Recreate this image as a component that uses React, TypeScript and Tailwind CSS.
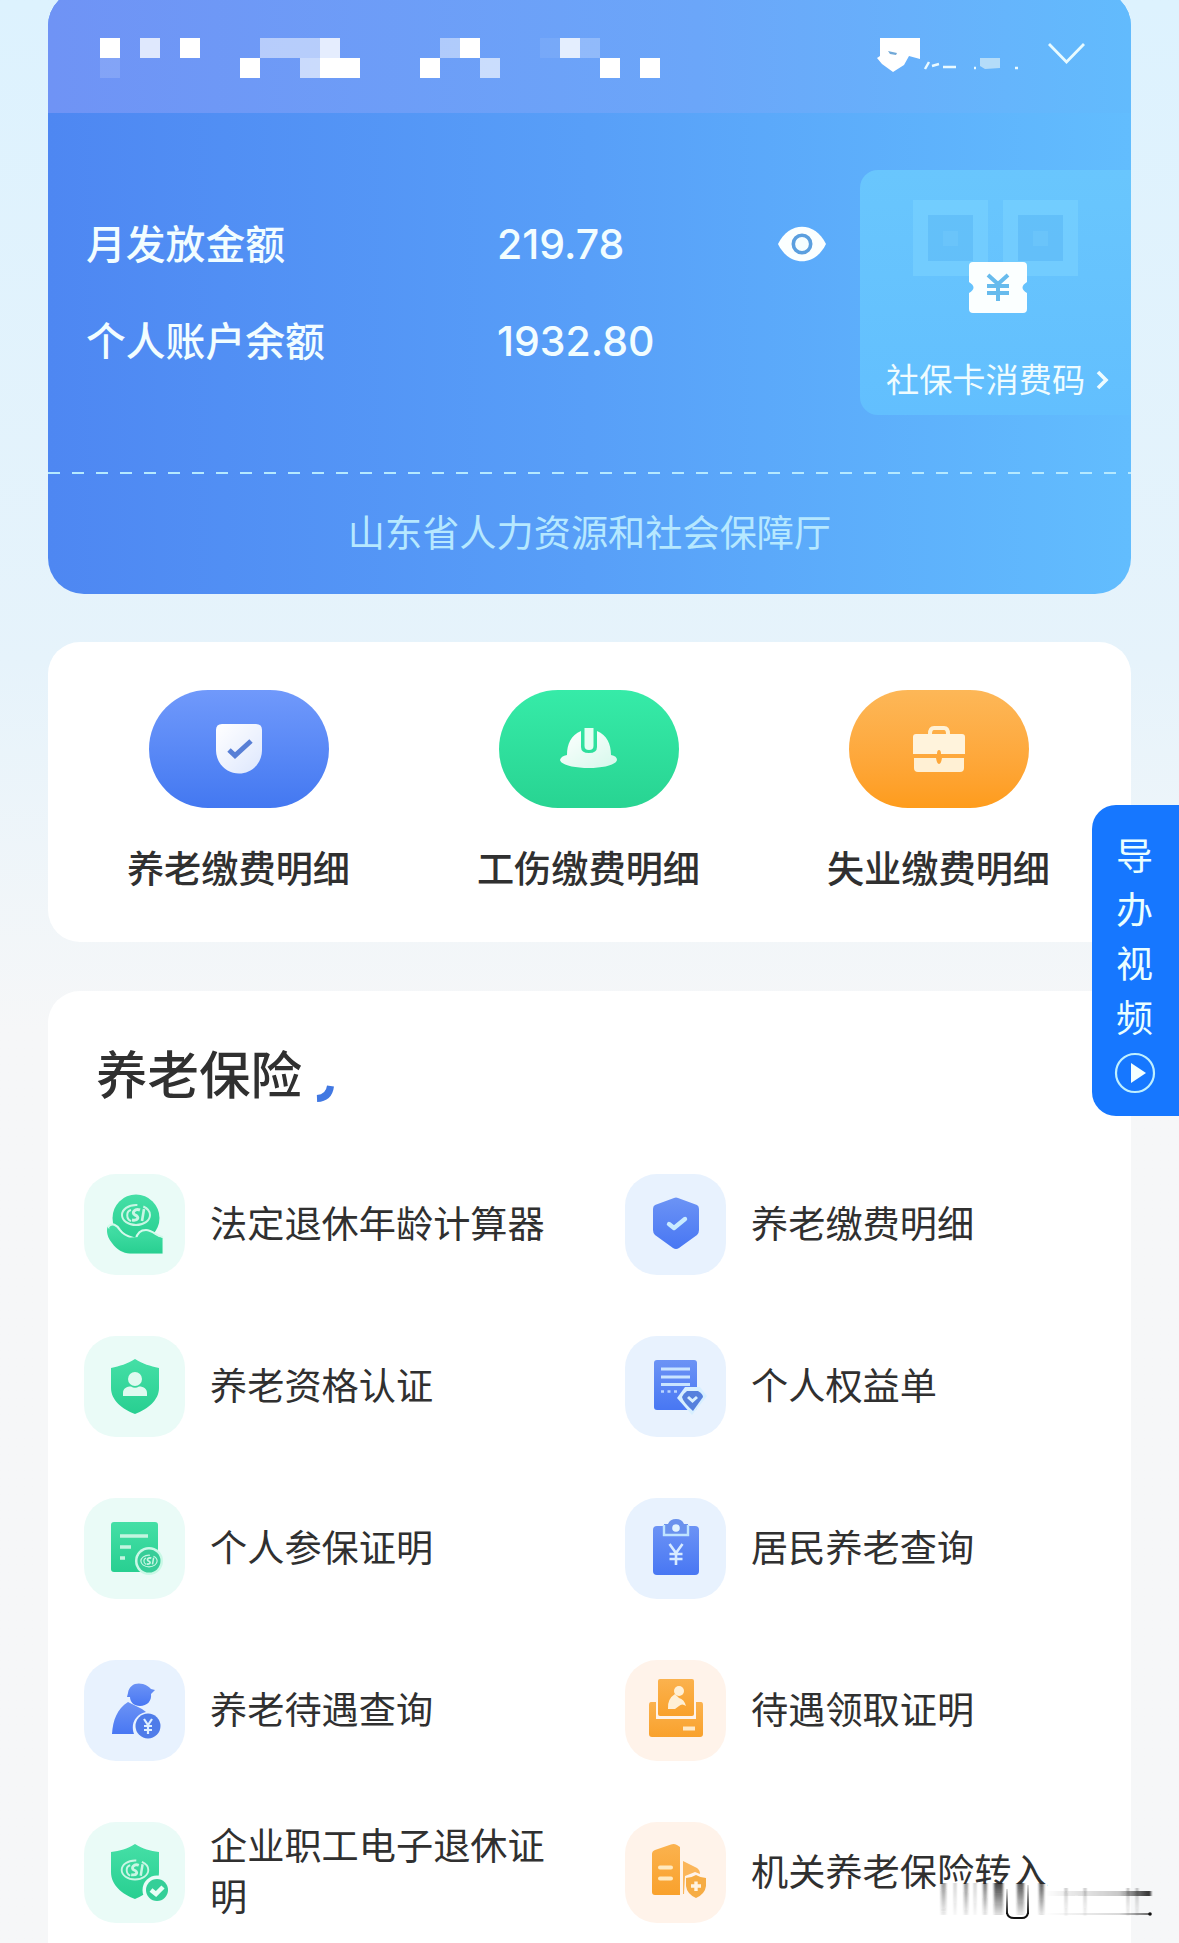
import React from "react";

type Tone = "green" | "blue" | "orange";

const tileBg: Record<Tone, string> = {
  green: "bg-[#eafbf7]",
  blue: "bg-[#e8f2fe]",
  orange: "bg-[#fff3ea]",
};
const soft: Record<Tone, string> = { green: "#dffaf0", blue: "#dff0ff", orange: "#fff0dc" };

function Gradients() {
  return (
    <svg width="0" height="0" className="absolute">
      <defs>
        <linearGradient id="green" x1="0" y1="0" x2="0" y2="1">
          <stop offset="0" stopColor="#45dfa6" />
          <stop offset="1" stopColor="#28cf91" />
        </linearGradient>
        <linearGradient id="blue" x1="0" y1="0" x2="0" y2="1">
          <stop offset="0" stopColor="#6c93f5" />
          <stop offset="1" stopColor="#4877f3" />
        </linearGradient>
        <linearGradient id="orange" x1="0" y1="0" x2="0" y2="1">
          <stop offset="0" stopColor="#fbb24e" />
          <stop offset="1" stopColor="#f9a12c" />
        </linearGradient>
        <linearGradient id="paper" x1="0" y1="0" x2="1" y2="1">
          <stop offset="0" stopColor="#ffffff" />
          <stop offset="1" stopColor="#ffffff" stopOpacity="0.8" />
        </linearGradient>
      </defs>
    </svg>
  );
}

function Emblem({ cx, cy, s = 1 }: { cx: number; cy: number; s?: number }) {
  return (
    <g transform={`translate(${cx} ${cy}) scale(${s})`} fill="none" stroke="#c9f6e4" strokeWidth="2">
      <ellipse cx="0" cy="0" rx="14" ry="10" strokeDasharray="58 6" />
      <path d="M-5 -5 C-10 -4 -10 4 -5 6" />
      <path d="M4 -5 C-1 -7 -5 -2 -1 0 C4 2 2 6 -4 5" strokeWidth="3" />
      <path d="M8 -6 L6 6" strokeWidth="2.600" />
    </g>
  );
}

const HandIcon = () => (
  <g fill="url(#green)">
    <circle cx="52" cy="44" r="23.500" />
    <path
      d="M24 53 C28 48 33 51 36 56 C40 62 46 63 52 65 C53 60 56 56 62 56 C68 56 73 62 78 63 V79 H46 C33 78 25 67 24 53Z"
      stroke="#d5faec"
      strokeWidth="2.200"
    />
    <path d="M24 54 C24 50 20 60 28 69 C33 76 39 79 46 79.500 H78.500 V64 L70 62 L40 64Z" />
    <Emblem cx={52} cy={41} />
  </g>
);
const PersonShieldIcon = () => (
  <g>
    <path d="M51 23 C59 28 66 30 75 32 V52 C75 64 64 73 51 78 C38 73 27 64 27 52 V32 C36 30 43 28 51 23Z" fill="url(#green)" />
    <circle cx="51" cy="43" r="7" fill={soft.green} />
    <path d="M39 60 V57 C39 52 43 50.500 47 50.500 Q51 53 55 50.500 C60 50.500 63 53 63 57 V60Z" fill={soft.green} />
  </g>
);
const CertificateIcon = () => (
  <g>
    <rect x="27" y="24" width="47" height="50" rx="3" fill="url(#green)" />
    <path d="M36 38 H64 M36 49 H47 M36 60 H41" stroke="#c3f5e0" strokeWidth="3.6" />
    <circle cx="65" cy="63" r="14" fill="#c9f8e6" />
    <circle cx="65" cy="63" r="11.5" fill="#37cd98" />
    <Emblem cx={65} cy={63} s={0.58} />
  </g>
);
const ElderIcon = () => (
  <g>
    <path d="M44 33 C45 25 52 22 59 24 C63 25 65 27 67 29 L71 30 L67 34 C68 41 63 46 56 46 C50 46 46 42 46 37 L43 37Z" fill="url(#blue)" />
    <path d="M44 42 L58 49 L62 52 C53 54 46 62 50 74 H28 C29 60 33 49 44 42Z" fill="url(#blue)" />
    <circle cx="64" cy="66" r="12.5" fill="#4f7ce9" />
    <path d="M60 59 L64 65 L68 59 M60 66 H68 M60 70 H68 M64 65 V74" stroke="#dff0ff" strokeWidth="2.200" fill="none" />
  </g>
);
const RetireShieldIcon = () => (
  <g>
    <path d="M51 22 C59 27 66 29 75 30 V50 C75 63 63 72 51 77 C38 72 27 63 27 50 V30 C36 29 43 27 51 22Z" fill="url(#green)" />
    <Emblem cx={51} cy={48} s={0.95} />
    <circle cx="73" cy="68" r="14.5" fill="#eafbf7" />
    <circle cx="73" cy="68" r="11" fill="#34cf98" />
    <path d="M67 68 L72 72 L79 65" stroke="#e9fff7" strokeWidth="4.500" fill="none" />
  </g>
);
const HexShieldIcon = () => (
  <g>
    <path d="M49 24 Q51 23 53 24 L72 31 Q74 32 74 35 V56 Q74 59 72 61 L54 74 Q51 76 48 74 L30 61 Q28 59 28 56 V35 Q28 32 30 31Z" fill="url(#blue)" />
    <path d="M44 50 L49 54 L60 45" stroke="#c9ebff" strokeWidth="4.4" fill="none" strokeLinecap="round" strokeLinejoin="round" />
  </g>
);
const RightsIcon = () => (
  <g>
    <rect x="29" y="24" width="43" height="50" rx="3" fill="url(#blue)" />
    <path d="M36 33 H65 M36 41 H65 M36 48.500 H65" stroke="#c9e4ff" strokeWidth="3.2" />
    <path d="M36 55.500 H53" stroke="#b9d5ff" strokeWidth="2.600" strokeDasharray="3 3.500" />
    <path d="M60 51 H75 L82 60 L67 79 L52 62Z" fill="#d7efff" />
    <path d="M62 55 H73 Q78 58 78 61 L68 75 Q58 66 57 61 Q58 58 62 55Z" fill="#5580dd" />
    <path d="M63 61 L67.500 65 L72 61" stroke="#d7efff" strokeWidth="3" fill="none" />
  </g>
);
const ClipboardIcon = () => (
  <g>
    <rect x="28" y="28" width="46" height="49" rx="4" fill="url(#blue)" />
    <path d="M39 26 V37 H63 V26 L59 26 Q57 21 51 21 Q45 21 43 26Z" fill="#6a92ed" />
    <path d="M39 27 V37 H63 V27" fill="none" stroke="#bfe4ff" strokeWidth="2.400" />
    <circle cx="51" cy="30" r="3.800" fill="#e2f4ff" />
    <path d="M44.500 46 L51 55 L57.500 46 M44.500 56 H57.500 M44.500 61 H57.500 M51 55 V67" stroke="#d7ebff" strokeWidth="2.600" fill="none" />
  </g>
);
const PayoutIcon = () => (
  <g>
    <path d="M26 42 H31 V59 H71 V42 H76 Q78 42 78 45 V74 Q78 77 75 77 H27 Q24 77 24 74 V45 Q24 42 26 42Z" fill="url(#orange)" />
    <rect x="33" y="19" width="36" height="37" rx="2" fill="url(#orange)" />
    <circle cx="54" cy="31" r="5" fill="#fff0d6" />
    <path d="M50 34 L54 38 Q59 39 61 46 Q57 43 54 46 L50 49 H43 Q42 39 50 34Z" fill="#fff0d6" />
    <path d="M58 68.500 H70" stroke="#ffe9c6" strokeWidth="4" />
  </g>
);
const BuildingIcon = () => (
  <g>
    <path d="M27 32 Q27 29 30 28 L46 22.500 Q49 21.500 52 23 L55 25 V73 H30 Q27 73 27 70Z" fill="url(#orange)" />
    <path d="M35 45.500 H46 M35 56.500 H46" stroke="#ffe9bf" strokeWidth="4" strokeLinecap="round" />
    <path d="M58 39 L72 46 Q75 48 75 52 L70 50 L60 54 L59 72 H58Z" fill="#fbb65b" />
    <path d="M71 53 Q76 56 81 56 V64 Q80 72 71 76 Q62 72 61 64 V56 Q66 56 71 53Z" fill="#f6ac44" />
    <path d="M66 64 H76 M71 59.500 V69" stroke="#fff3e0" strokeWidth="3.400" />
  </g>
);

interface Service {
  label: string;
  tone: Tone;
  Icon: React.FC;
}

const services: Service[] = [
  { label: "法定退休年龄计算器", tone: "green", Icon: HandIcon },
  { label: "养老缴费明细", tone: "blue", Icon: HexShieldIcon },
  { label: "养老资格认证", tone: "green", Icon: PersonShieldIcon },
  { label: "个人权益单", tone: "blue", Icon: RightsIcon },
  { label: "个人参保证明", tone: "green", Icon: CertificateIcon },
  { label: "居民养老查询", tone: "blue", Icon: ClipboardIcon },
  { label: "养老待遇查询", tone: "blue", Icon: ElderIcon },
  { label: "待遇领取证明", tone: "orange", Icon: PayoutIcon },
  { label: "企业职工电子退休证明", tone: "green", Icon: RetireShieldIcon },
  { label: "机关养老保险转入", tone: "orange", Icon: BuildingIcon },
];

function ServiceItem({ label, tone, Icon }: Service) {
  return (
    <div className="flex h-[162px] items-center gap-[25px]">
      <div className={`h-[101px] w-[101px] shrink-0 rounded-[32px] ${tileBg[tone]}`}>
        <svg viewBox="0 0 101 101" className="h-full w-full">
          <Icon />
        </svg>
      </div>
      <span className="w-[338px] pb-[4px] text-[37.2px] leading-[51px] text-[#303030]">{label}</span>
    </div>
  );
}

const quick = [
  {
    label: "养老缴费明细",
    bg: "bg-linear-to-b from-[#7099fb] to-[#4378f1]",
    icon: (
      <g>
        <path d="M73 34 H107 Q113 34 113 40 V60 C113 74 102 83.500 90 83.500 C78 83.500 67 74 67 60 V40 Q67 34 73 34Z" fill="url(#paper)" />
        <path d="M80 60 L86 65.500 L102 51" fill="none" stroke="#587fd6" strokeWidth="5" />
      </g>
    ),
  },
  {
    label: "工伤缴费明细",
    bg: "bg-linear-to-b from-[#36eba8] to-[#28d492]",
    icon: (
      <g>
        <path d="M82 41 V57 Q82 63 90 63 Q98 63 98 57 V41 C108 45 112 54 112 65 Q118 66 118 70 C117 75 104 78 90 78 C75 78 62 75 61 70 Q62 66 68 65 C68 54 72 45 82 41Z" fill="url(#paper)" />
        <path d="M85.500 38 H94.500 V56 Q94.500 60 90 60 Q85.500 60 85.500 56Z" fill="#e2fff2" />
      </g>
    ),
  },
  {
    label: "失业缴费明细",
    bg: "bg-linear-to-b from-[#fdb757] to-[#fe9c1b]",
    icon: (
      <g>
        <path d="M81 44 Q81 38 85 38 H95 Q99 38 99 44" fill="none" stroke="#fff1d5" strokeWidth="4" />
        <path d="M67 44 H113 Q116 44 116 47 V64 H92 Q92 60 90 60 Q88 60 88 64 H64 V47 Q64 44 67 44Z" fill="#fff3dc" />
        <path d="M65 68 H87 Q88 74 90 74 Q92 74 93 68 H115 V78 Q115 82 111 82 H69 Q65 82 65 78Z" fill="#fff0d4" />
      </g>
    ),
  },
];

/* Mosaic cells: x, y, opacity */
const cells: [number, number, number][] = [
  [0, 0, 1], [40, 0, 0.78], [80, 0, 1], [0, 20, 0.14],
  [160, 0, 0.5], [180, 0, 0.5], [200, 0, 0.5], [220, 0, 0.82],
  [140, 20, 1], [200, 20, 0.64], [220, 20, 1], [240, 20, 1],
  [340, 0, 0.46], [360, 0, 1], [320, 20, 1], [380, 20, 0.64],
  [440, 0, 0.08], [460, 0, 0.82], [480, 0, 0.25], [500, 20, 1], [540, 20, 1],
];

function CardHeader() {
  return (
    <div className="flex h-[113px] items-start bg-linear-to-r from-[#6f93f5] via-[#6ba6f9] via-60% to-[#62bbfd] pt-[38px] pl-[52px]">
      <svg width="560" height="40" shapeRendering="crispEdges">
        {cells.map(([x, y, o]) => (
          <rect key={`${x}-${y}`} x={x} y={y} width="20" height="20" fill="#fff" fillOpacity={o} />
        ))}
      </svg>
      <svg width="145" height="36" className="ml-[217px]">
        <path d="M3 0 H43 V21 L32 18 L27 27 L16 34 L5 26 L0 20 L3 18Z" fill="#fff" />
        <path d="M11 13 L20 15 L19 17 L13 16Z" fill="#72a9d8" />
        <path d="M52 24 L48 31 M55 28 L62 26 M66 29 H79 M97 30 h2 M138 30 h3" stroke="#eafaff" strokeWidth="2.500" />
        <path d="M103 20 H123 V30 L108 31 L103 28Z" fill="#b4dcf9" />
      </svg>
      <svg width="38" height="24" className="mt-[4px] ml-[26px]">
        <path d="M1 2 L18.500 20 L36 2" fill="none" stroke="#e8fbff" strokeWidth="2.800" />
      </svg>
    </div>
  );
}

function PayCode() {
  return (
    <div className="flex h-[245px] w-[271px] flex-col rounded-l-[18px] bg-linear-to-b from-[#69c6fd] to-[#62bffe] pl-[26px]">
      <svg width="230" height="150" className="shrink-0">
        <g fill="none" stroke="#79d2ff" strokeOpacity="0.6" strokeWidth="15">
          <rect x="34.500" y="37.500" width="60" height="61" />
          <rect x="124.500" y="37.500" width="60" height="61" />
        </g>
        <rect x="42" y="45" width="45" height="46" fill="#60bcf6" fillOpacity="0.5" />
        <rect x="132" y="45" width="45" height="46" fill="#60bcf6" fillOpacity="0.6" />
        <rect x="57" y="61" width="15" height="15" fill="#6ac4fa" />
        <rect x="147" y="61" width="15" height="15" fill="#6ac4fa" />
        <path d="M87 92 H137 Q141 92 141 96 V112 Q132 117.500 141 123 V139 Q141 143 137 143 H87 Q83 143 83 139 V123 Q92 117.500 83 112 V96 Q83 92 87 92Z" fill="#fbffff" />
        <path d="M102 105 L112 114 L122 105 M101 116 H123 M101 123 H123 M112 114 V131" stroke="#67bbed" strokeWidth="4" fill="none" />
      </svg>
      <div className="mt-[33px] flex items-center text-[33.2px] leading-[50px] text-[#effcff]">
        社保卡消费码
        <svg width="14" height="20" className="mt-[3px] ml-[11px]">
          <path d="M2 2 L10 10 L2 18" fill="none" stroke="#effcff" strokeWidth="3.600" />
        </svg>
      </div>
    </div>
  );
}

function BalanceCard() {
  return (
    <section className="-mt-[10px] h-[604px] overflow-hidden rounded-[36px] bg-linear-to-r from-[#4e87f2] via-[#589ff8] via-50% to-[#62bdfe] pt-[10px]">
      <CardHeader />
      <div className="flex h-[360px] justify-between pt-[57px]">
        <div className="flex pl-[38px] text-[39.8px] font-medium text-[#f2fdff]">
          <div className="w-[411px] pt-[23px] leading-[97px]">
            <p>月发放金额</p>
            <p>个人账户余额</p>
          </div>
          <div className="w-[280px] pt-[26px] font-['Inter'] text-[41px] leading-[97px]">
            <p>219.78</p>
            <p>1932.80</p>
          </div>
          <svg width="50" height="36" className="mt-[56px]">
            <path d="M1 18 C12 -5 38 -5 49 18 C38 41 12 41 1 18Z" fill="#fbffff" />
            <circle cx="25" cy="18" r="8.700" fill="#f5feff" stroke="#5a9fdf" strokeWidth="3.600" />
          </svg>
        </div>
        <PayCode />
      </div>
      <svg width="1083" height="2" className="-mt-px block">
        <path d="M0 1 H1083" stroke="#b5e9ff" strokeWidth="2" strokeDasharray="12 12" />
      </svg>
      <p className="mt-[31px] text-center text-[37.2px] leading-[52px] text-[#b6e8ff]">山东省人力资源和社会保障厅</p>
    </section>
  );
}

function VideoTab() {
  return (
    <aside className="absolute top-[805px] right-0 flex h-[311px] w-[87px] flex-col items-center rounded-l-[24px] bg-[#1677ff] pt-[22px] pr-[2px]">
      <div className="flex flex-col text-[37px] leading-[54px] text-[#eaffff]">
        <span>导</span>
        <span>办</span>
        <span>视</span>
        <span>频</span>
      </div>
      <svg width="42" height="42" className="mt-[9px]">
        <circle cx="21" cy="21" r="19" fill="none" stroke="#bff0ff" strokeWidth="2.200" />
        <path d="M17 11 L32 21 L17 31Z" fill="#f4ffff" />
      </svg>
    </aside>
  );
}

/* Smeared watermark strip under the last row */
const streaks: [number, number, number][] = [
  [4, 5, 0.45], [17, 2, 0.3], [27, 4, 0.5], [37, 2, 0.3], [46, 4, 0.6], [57, 9, 0.85],
  [80, 7, 0.75], [102, 5, 0.7], [128, 2, 0.35], [147, 2, 0.35], [190, 2, 0.4], [199, 2, 0.4],
];
function Smear() {
  return (
    <svg width="220" height="42" className="absolute top-[1881px] left-[937px]">
      <defs>
        <linearGradient id="fade" x1="0" y1="0" x2="0" y2="1">
          <stop offset="0" stopColor="#222" />
          <stop offset="1" stopColor="#222" stopOpacity="0.15" />
        </linearGradient>
        <linearGradient id="rise" x1="0" y1="0" x2="0" y2="1">
          <stop offset="0" stopColor="#222" stopOpacity="0.15" />
          <stop offset="1" stopColor="#111" />
        </linearGradient>
        <linearGradient id="fadeX" x1="0" y1="0" x2="1" y2="0">
          <stop offset="0" stopColor="#222" stopOpacity="0" />
          <stop offset="0.7" stopColor="#222" stopOpacity="0.25" />
          <stop offset="1" stopColor="#222" stopOpacity="0.95" />
        </linearGradient>
        <filter id="soften" x="-5%" y="-5%" width="110%" height="110%">
          <feGaussianBlur stdDeviation="1.200 0.500" />
        </filter>
      </defs>
      <rect x="0" y="3" width="110" height="33" fill="#fff" />
      <g filter="url(#soften)">
        {streaks.map(([x, w, o]) => (
          <rect key={x} x={x} y={x > 110 ? 7 : 2} width={w} height={x > 110 ? 28 : 32} fill="url(#fade)" opacity={o} />
        ))}
        <rect x="108" y="10" width="106" height="5" fill="url(#fadeX)" />
      </g>
      <rect x="69" y="8" width="2" height="25" fill="url(#rise)" />
      <rect x="90" y="4" width="2" height="29" fill="url(#rise)" />
      <path d="M70 32 Q71 37 77 37 H85 Q90 37 91 32" fill="none" stroke="#111" strokeWidth="2" />
      <rect x="108" y="32" width="106" height="2" fill="url(#fadeX)" opacity="0.7" />
      <circle cx="213" cy="33" r="1.800" fill="#111" />
    </svg>
  );
}

export default function App() {
  return (
    <main className="relative h-[1943px] w-[1179px] overflow-hidden bg-linear-to-b from-[#ddf2fe] via-[#e6f3fb] via-34% to-[#f6f7f8] to-53% px-[48px] font-['Noto_Sans_CJK_SC',sans-serif]">
      <Gradients />
      <BalanceCard />

      <section className="mt-[48px] grid h-[300px] grid-cols-[350px_350px_350px] justify-center rounded-[32px] bg-white pt-[48px] pr-[2px]">
        {quick.map((q) => (
          <div key={q.label} className="flex flex-col items-center">
            <div className={`h-[118px] w-[180px] rounded-full ${q.bg}`}>
              <svg viewBox="0 0 180 118" className="h-full w-full">{q.icon}</svg>
            </div>
            <span className="mt-[33px] text-[37.2px] leading-[52px] font-medium text-[#303030]">{q.label}</span>
          </div>
        ))}
      </section>

      <section className="mt-[49px] h-[980px] rounded-t-[32px] bg-white pt-[46px]">
        <div className="flex h-[70px] items-center pl-[48px]">
          <h2 className="text-[51.5px] leading-[70px] font-medium text-[#303030]">养老保险</h2>
          <svg width="28" height="26" className="mt-[40px] ml-[9px]">
            <path d="M6 19.500 Q18 19 19.500 7" fill="none" stroke="#4178e2" strokeWidth="7" />
          </svg>
        </div>
        <div className="mt-[36px] grid grid-cols-[541px_1fr] pl-[36px]">
          {services.map((s, i) => (
            <ServiceItem key={i} {...s} />
          ))}
        </div>
      </section>

      <VideoTab />
      <Smear />
    </main>
  );
}
